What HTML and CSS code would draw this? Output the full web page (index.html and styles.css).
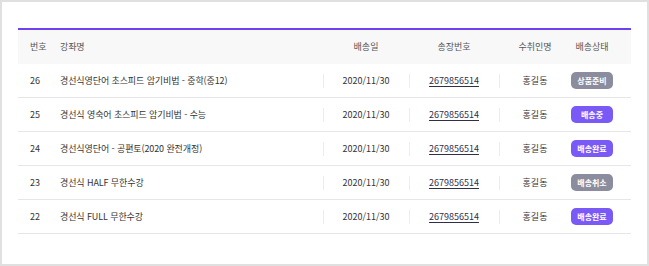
FILE: index.html
```html
<!DOCTYPE html>
<html lang="ko">
<head>
<meta charset="utf-8">
<link rel="stylesheet" href="styles.css">
</head>
<body>
<div class="frame">
  <div class="board">
    <div class="row head">
      <div class="c c-no">번호</div>
      <div class="c c-title">강좌명</div>
      <div class="c c-mid">배송일</div>
      <div class="c c-mid">송장번호</div>
      <div class="c c-mid">수취인명</div>
      <div class="c c-state">배송상태</div>
    </div>
    <div class="row">
      <div class="c c-no">26</div>
      <div class="c c-title">경선식영단어 초스피드 암기비법 - 중학(중12)</div>
      <div class="c c-mid sep">2020/11/30</div>
      <div class="c c-mid sep"><a class="inv" href="#">2679856514</a></div>
      <div class="c c-mid sep">홍길동</div>
      <div class="c c-state"><span class="badge grey">상품준비</span></div>
    </div>
    <div class="row">
      <div class="c c-no">25</div>
      <div class="c c-title">경선식 영숙어 초스피드 암기비법 - 수능</div>
      <div class="c c-mid sep">2020/11/30</div>
      <div class="c c-mid sep"><a class="inv" href="#">2679856514</a></div>
      <div class="c c-mid sep">홍길동</div>
      <div class="c c-state"><span class="badge purple">배송중</span></div>
    </div>
    <div class="row">
      <div class="c c-no">24</div>
      <div class="c c-title">경선식영단어 - 공편토(2020 완전개정)</div>
      <div class="c c-mid sep">2020/11/30</div>
      <div class="c c-mid sep"><a class="inv" href="#">2679856514</a></div>
      <div class="c c-mid sep">홍길동</div>
      <div class="c c-state"><span class="badge purple">배송완료</span></div>
    </div>
    <div class="row">
      <div class="c c-no">23</div>
      <div class="c c-title">경선식 HALF 무한수강</div>
      <div class="c c-mid sep">2020/11/30</div>
      <div class="c c-mid sep"><a class="inv" href="#">2679856514</a></div>
      <div class="c c-mid sep">홍길동</div>
      <div class="c c-state"><span class="badge grey">배송취소</span></div>
    </div>
    <div class="row">
      <div class="c c-no">22</div>
      <div class="c c-title">경선식 FULL 무한수강</div>
      <div class="c c-mid sep">2020/11/30</div>
      <div class="c c-mid sep"><a class="inv" href="#">2679856514</a></div>
      <div class="c c-mid sep">홍길동</div>
      <div class="c c-state"><span class="badge purple">배송완료</span></div>
    </div>
  </div>
</div>
</body>
</html>
```

FILE: styles.css
```css
html, body {
  margin: 0;
  padding: 0;
  background: #ffffff;
}
body {
  font-family: "Noto Sans CJK KR", "Noto Sans", sans-serif;
  font-size: 9px;
  color: #333333;
}
.frame {
  box-sizing: border-box;
  width: 649px;
  height: 266px;
  border: 2px solid #e0e0e0;
  padding: 26px 16px 0 16px;
}
.board {
  width: 613px;
  border-top: 2px solid #6f42f0;
}
.row {
  display: grid;
  grid-template-columns: 41px 264px 86px 90px 72px 60px;
  height: 33px;
  border-bottom: 1px solid #e6e6e8;
}
.row.head {
  height: 33px;
  background: #f8f8f9;
  border-bottom: 1px solid #f8f8f9;
  color: #555555;
}
.c {
  position: relative;
  display: flex;
  align-items: center;
  white-space: nowrap;
}
.c-no {
  padding-left: 12px;
}
.c-title {
  padding-left: 1px;
  letter-spacing: -0.1px;
}
.c-mid {
  justify-content: center;
}
.c-state {
  justify-content: center;
  padding-right: 18px;
}
.sep::before {
  content: "";
  position: absolute;
  left: 0;
  top: 10px;
  width: 1px;
  height: 14px;
  background: #ececee;
}
.inv {
  color: #2f2f48;
  text-decoration: underline;
  text-underline-offset: 2px;
}
.badge {
  display: inline-flex;
  align-items: center;
  justify-content: center;
  width: 42px;
  height: 17px;
  border-radius: 5px;
  color: #ffffff;
  font-size: 8px;
  font-weight: 700;
}
.badge.grey {
  background: #8b8c9e;
}
.badge.purple {
  background: #7a5af6;
}
```
